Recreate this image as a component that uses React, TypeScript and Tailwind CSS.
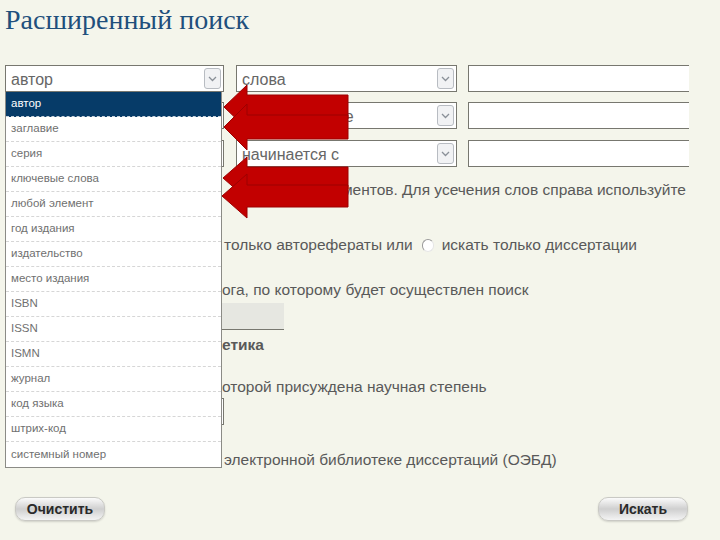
const fields = [
  'автор',
  'заглавие',
  'серия',
  'ключевые слова',
  'любой элемент',
  'год издания',
  'издательство',
  'место издания',
  'ISBN',
  'ISSN',
  'ISMN',
  'журнал',
  'код языка',
  'штрих-код',
  'системный номер',
];

const body = "font-['Liberation_Sans','Noto_Sans',sans-serif]";

function DropButton() {
  return (
    <span className="flex h-[21px] w-[17px] shrink-0 items-center justify-center rounded-[3px] border border-[#b8bcc2] bg-[#f1f2f4]">
      <svg width="9" height="6" viewBox="0 0 9 6">
        <path d="M1 1l3.5 3.5L8 1" fill="none" stroke="#8a9098" strokeWidth="1.3" />
      </svg>
    </span>
  );
}

function Select({ value, width }: { value: string; width: string }) {
  return (
    <div className={`flex h-[27px] ${width} items-center justify-between border border-[#77776f] bg-white pl-[5px] pr-[2px]`}>
      <span className="pt-[3px] text-[16px] leading-none text-[#666]">{value}</span>
      <DropButton />
    </div>
  );
}

function SearchRow({ first, second }: { first: string; second: string }) {
  return (
    <div className="flex pl-[5px]">
      <Select value={first} width="w-[219px]" />
      <div className="ml-[12px]">
        <Select value={second} width="w-[221px]" />
      </div>
      <div className="ml-[11px] h-[27px] w-[221px] border border-r-0 border-[#77776f] bg-white" />
    </div>
  );
}

// строка текста, левая часть которой закрыта выпадающим списком
function Line({ children, className = '' }: { children: React.ReactNode; className?: string }) {
  return (
    <div className={`flex items-center whitespace-nowrap pl-[5px] text-[15.5px] text-[#595959] ${className}`}>
      <span className="w-[217px] shrink-0" />
      {children}
    </div>
  );
}

function Radio() {
  return (
    <span className="ml-[9px] mr-[8px] inline-block h-[13px] w-[12px] rounded-full border border-[#9a9a9a] border-r-[#e6e6e6] border-b-[#e6e6e6] bg-white" />
  );
}

function PillButton({ label }: { label: string }) {
  return (
    <button className="flex h-[24px] w-[90px] items-center justify-center rounded-[10px] border border-[#c9c9c4] bg-gradient-to-b from-[#fbfbfb] via-[#cfcfcf] to-[#f4f4f4] text-[14px] font-bold text-[#2a2a2a] shadow-[0_1px_2px_rgba(0,0,0,0.15)]">
      {label}
    </button>
  );
}

function Arrows() {
  const arrow = (tip: number, y: number, head: number, shaft: number) =>
    `${tip},${y} 247,${y - head} 247,${y - shaft} 348,${y - shaft} 348,${y + shaft} 247,${y + shaft} 247,${y + head}`;
  return (
    <svg className="pointer-events-none absolute left-0 top-0" width="720" height="540" viewBox="0 0 720 540">
      <g fill="#c20000" stroke="#9c0000" strokeWidth="1">
        <polygon points={arrow(224, 107, 22, 12)} />
        <polygon points={arrow(224, 127, 23, 12)} />
        <polygon points={arrow(223, 178, 21, 11)} />
        <polygon points={arrow(222, 196, 22, 11)} />
      </g>
    </svg>
  );
}

export default function App() {
  return (
    <div className={`relative h-[540px] w-[720px] overflow-hidden bg-[#f4f5eb] ${body}`}>
      <h1 className="h-[40px] pl-[5px] pt-[2px] font-['Liberation_Serif',serif] text-[28px] leading-[36px] text-[#1f4f7c]">
        Расширенный поиск
      </h1>

      <div className="mt-[25px]">
        <SearchRow first="автор" second="слова" />
      </div>
      <div className="mt-[10px]">
        <SearchRow first="" second="в любом месте" />
      </div>
      <div className="mt-[11px]">
        <SearchRow first="" second="начинается с" />
      </div>

      <div className="mt-[11px] flex h-[24px] w-[686px] items-center justify-end whitespace-nowrap text-[15.5px] text-[#595959]">
        элементов. Для усечения слов справа используйте
      </div>

      <Line className="mt-[31px] h-[24px]">
        <span className="ml-[2px]">только авторефераты или</span>
        <Radio />
        искать только диссертации
      </Line>

      <Line className="mt-[21px] h-[24px]">ога, по которому будет осуществлен поиск</Line>

      <div className="ml-[5px] mt-[1px] h-[27px] w-[279px] border-b border-[#77776f] bg-[#e6e7e1]" />

      <Line className="mt-[4px] h-[22px] font-bold text-[#444]">етика</Line>

      <Line className="mt-[19px] h-[23px]">оторой присуждена научная степень</Line>

      <div className="ml-[5px] h-[27px] w-[219px] border border-[#77776f] bg-white" />

      <Line className="mt-[23px] h-[24px]">
        <span className="ml-[2px]">электронной библиотеке диссертаций (ОЭБД)</span>
      </Line>

      <div className="mt-[25px] flex items-center justify-between pl-[15px] pr-[32px]">
        <PillButton label="Очистить" />
        <PillButton label="Искать" />
      </div>

      {/* выпадающий список поля */}
      <ul className="absolute left-[5px] top-[92px] w-[217px] border border-t-0 border-[#8b8b86] bg-white text-[11.5px] text-[#707070]">
        {fields.map((f, i) => (
          <li
            key={f}
            className={
              i === 0
                ? 'flex h-[25px] items-center border-b border-dashed border-[#c9d3dc] bg-[#063b68] pl-[5px] text-white'
                : 'flex h-[25px] items-center border-b border-dashed border-[#d6d6d6] pl-[5px] last:border-b-0'
            }
          >
            {f}
          </li>
        ))}
      </ul>

      <Arrows />
    </div>
  );
}
